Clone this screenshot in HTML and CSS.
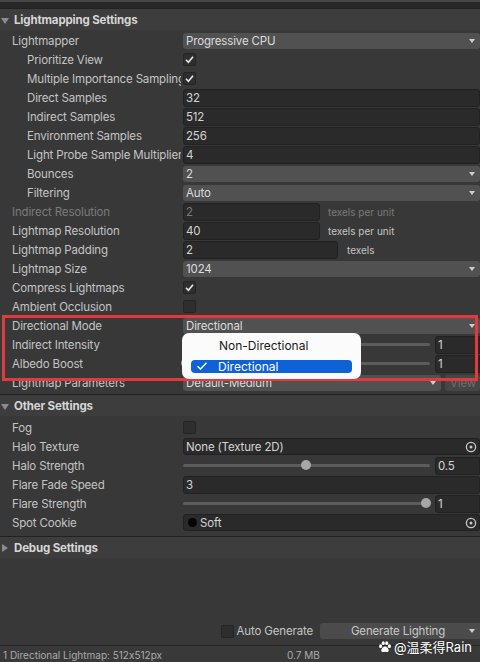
FILE: index.html
```html
<!DOCTYPE html>
<html>
<head>
<meta charset="utf-8">
<title>Lighting</title>
<link rel="stylesheet" href="styles.css">
</head>
<body>
<div class="topstrip"></div>

<section class="sec first">
  <div class="hdr"><span class="tri-down"></span><span>Lightmapping Settings</span></div>
  <div class="rows">
    <div class="row"><div class="lbl">Lightmapper</div><div class="val"><div class="dd">Progressive CPU<i class="arr"></i></div></div></div>
    <div class="row"><div class="lbl sub">Prioritize View</div><div class="val"><span class="cb"><svg viewBox="0 0 13 13" width="13" height="13"><path d="M3 6.8 L5.4 9.2 L10 3.8" fill="none" stroke="#e8e8e8" stroke-width="1.6"/></svg></span></div></div>
    <div class="row"><div class="lbl sub">Multiple Importance Sampling</div><div class="val"><span class="cb"><svg viewBox="0 0 13 13" width="13" height="13"><path d="M3 6.8 L5.4 9.2 L10 3.8" fill="none" stroke="#e8e8e8" stroke-width="1.6"/></svg></span></div></div>
    <div class="row"><div class="lbl sub">Direct Samples</div><div class="val"><div class="tf">32</div></div></div>
    <div class="row"><div class="lbl sub">Indirect Samples</div><div class="val"><div class="tf">512</div></div></div>
    <div class="row"><div class="lbl sub">Environment Samples</div><div class="val"><div class="tf">256</div></div></div>
    <div class="row"><div class="lbl sub">Light Probe Sample Multiplier</div><div class="val"><div class="tf">4</div></div></div>
    <div class="row"><div class="lbl sub">Bounces</div><div class="val"><div class="dd">2<i class="arr"></i></div></div></div>
    <div class="row"><div class="lbl sub">Filtering</div><div class="val"><div class="dd">Auto<i class="arr"></i></div></div></div>
    <div class="row"><div class="lbl dis">Indirect Resolution</div><div class="val"><div class="tf short dis">2</div><span class="unit dis">texels per unit</span></div></div>
    <div class="row"><div class="lbl">Lightmap Resolution</div><div class="val"><div class="tf short">40</div><span class="unit">texels per unit</span></div></div>
    <div class="row"><div class="lbl">Lightmap Padding</div><div class="val"><div class="tf pad">2</div><span class="unit">texels</span></div></div>
    <div class="row"><div class="lbl">Lightmap Size</div><div class="val"><div class="dd">1024<i class="arr"></i></div></div></div>
    <div class="row"><div class="lbl">Compress Lightmaps</div><div class="val"><span class="cb"><svg viewBox="0 0 13 13" width="13" height="13"><path d="M3 6.8 L5.4 9.2 L10 3.8" fill="none" stroke="#e8e8e8" stroke-width="1.6"/></svg></span></div></div>
    <div class="row"><div class="lbl">Ambient Occlusion</div><div class="val"><span class="cb"></span></div></div>
    <div class="row"><div class="lbl">Directional Mode</div><div class="val"><div class="dd">Directional<i class="arr"></i></div></div></div>
    <div class="row"><div class="lbl">Indirect Intensity</div><div class="val"><div class="slider"><div class="track"></div><div class="thumb" style="left:48px"></div></div><div class="num">1</div></div></div>
    <div class="row"><div class="lbl">Albedo Boost</div><div class="val"><div class="slider"><div class="track"></div><div class="thumb" style="left:3px"></div></div><div class="num">1</div></div></div>
    <div class="row"><div class="lbl">Lightmap Parameters</div><div class="val"><div class="dd">Default-Medium<i class="arr"></i></div><div class="btn-view">View</div></div></div>
  </div>
</section>

<section class="sec second">
  <div class="hdr"><span class="tri-down"></span><span>Other Settings</span></div>
  <div class="rows">
    <div class="row"><div class="lbl">Fog</div><div class="val"><span class="cb"></span></div></div>
    <div class="row"><div class="lbl">Halo Texture</div><div class="val"><div class="obj"><span class="otxt">None (Texture 2D)</span><span class="pick"><svg viewBox="0 0 12 12" width="12" height="12"><circle cx="6" cy="6" r="4.6" fill="none" stroke="#c9c9c9" stroke-width="1.3"/><circle cx="6" cy="6" r="1.5" fill="#c9c9c9"/></svg></span></div></div></div>
    <div class="row"><div class="lbl">Halo Strength</div><div class="val"><div class="slider"><div class="track"></div><div class="thumb" style="left:123px"></div></div><div class="num">0.5</div></div></div>
    <div class="row"><div class="lbl">Flare Fade Speed</div><div class="val"><div class="tf">3</div></div></div>
    <div class="row"><div class="lbl">Flare Strength</div><div class="val"><div class="slider"><div class="track"></div><div class="thumb" style="left:243px"></div></div><div class="num">1</div></div></div>
    <div class="row"><div class="lbl">Spot Cookie</div><div class="val"><div class="obj"><span class="cookie"></span><span class="otxt">Soft</span><span class="pick"><svg viewBox="0 0 12 12" width="12" height="12"><circle cx="6" cy="6" r="4.6" fill="none" stroke="#c9c9c9" stroke-width="1.3"/><circle cx="6" cy="6" r="1.5" fill="#c9c9c9"/></svg></span></div></div></div>
  </div>
</section>

<section class="sec">
  <div class="hdr"><span class="tri-right"></span><span>Debug Settings</span></div>
</section>

<div class="spacer"></div>

<div class="gen-row">
  <span class="cb"></span>
  <span class="gen-lbl">Auto Generate</span>
  <div class="gen-btn">Generate Lighting<i class="arr"></i></div>
</div>

<div class="status">
  <span class="st-main">1 Directional Lightmap: 512x512px</span>
  <span class="st-mb">0.7 MB</span>
</div>

<div class="redbox"></div>

<div class="menu">
  <div class="mi">Non-Directional</div>
  <div class="mi sel"><svg class="mcheck" viewBox="0 0 12 10" width="12" height="10"><path d="M1.5 5.2 L4.5 8 L10.5 1.8" fill="none" stroke="#ffffff" stroke-width="1.4"/></svg>Directional</div>
</div>

<div class="wm">
  <svg viewBox="0 0 16 16" width="14" height="14"><ellipse cx="3" cy="7" rx="1.7" ry="2.1" fill="#fff"/><ellipse cx="6" cy="3.6" rx="1.7" ry="2.1" fill="#fff"/><ellipse cx="10" cy="3.6" rx="1.7" ry="2.1" fill="#fff"/><ellipse cx="13" cy="7" rx="1.7" ry="2.1" fill="#fff"/><path d="M8 7.5 C5.5 7.5 3.6 10.5 3.8 12.3 C4 14.2 6 14 8 13.4 C10 14 12 14.2 12.2 12.3 C12.4 10.5 10.5 7.5 8 7.5 Z" fill="#fff"/></svg>
  <span>@温柔得Rain</span>
</div>
</body>
</html>
```

FILE: styles.css
```css
* { box-sizing: border-box; }
html, body { margin: 0; padding: 0; }
body {
  width: 480px;
  height: 662px;
  overflow: hidden;
  background: #383838;
  font-family: Inter, "Noto Sans", "Noto Sans CJK SC", sans-serif;
  font-size: 11.5px;
  letter-spacing: -0.15px;
  font-feature-settings: "calt" 0;
  color: #c4c4c4;
  display: flex;
  flex-direction: column;
  position: relative;
}

.topstrip {
  flex: none;
  height: 8px;
  background: #282828;
  border-top: 2px solid #464646;
}

.hdr {
  flex: none;
  height: 22px;
  border-top: 1px solid #222222;
  background: #3d3d3d;
  display: flex;
  align-items: center;
  padding-top: 1px;
  font-weight: 700;
  color: #d6d6d6;
}
.tri-down {
  width: 0; height: 0;
  border-left: 4px solid transparent;
  border-right: 4px solid transparent;
  border-top: 6px solid #8c8c8c;
  margin: 1px 5px 0 1px;
}
.tri-right {
  width: 0; height: 0;
  border-top: 4px solid transparent;
  border-bottom: 4px solid transparent;
  border-left: 6px solid #8c8c8c;
  margin: 0 6px 0 2px;
}

.rows { padding-top: 1px; padding-bottom: 4px; }
.first .rows { padding-bottom: 2px; }
.second .rows { padding-top: 2px; padding-bottom: 4px; }
.row { height: 19px; display: flex; align-items: center; }
.lbl {
  flex: none;
  width: 181px;
  margin-right: 2px;
  padding-left: 12px;
  white-space: nowrap;
  overflow: hidden;
}
.lbl.sub { padding-left: 27px; }
.lbl.dis { color: #7a7a7a; }

.val { flex: 1; min-width: 0; height: 100%; display: flex; align-items: center; }

.dd {
  flex: 1;
  height: 16px;
  line-height: 16px;
  background: #515151;
  border-radius: 3px;
  padding: 0 3px;
  position: relative;
  color: #dcdcdc;
  white-space: nowrap;
}
.arr {
  position: absolute;
  right: 5px;
  top: 6px;
  width: 0; height: 0;
  border-left: 3.5px solid transparent;
  border-right: 3.5px solid transparent;
  border-top: 4px solid #cfcfcf;
}

.tf {
  flex: 1;
  height: 18px;
  line-height: 16px;
  background: #2a2a2a;
  border: 1px solid #212121;
  border-radius: 3px;
  padding: 0 2px;
  color: #d4d4d4;
}
.tf.short { flex: none; width: 137px; }
.tf.pad { flex: none; width: 155px; }
.tf.dis { color: #7a7a7a; }
.unit { font-size: 10px; letter-spacing: 0; margin-left: 8px; color: #c4c4c4; }
.tf.pad + .unit { margin-left: 9px; }
.unit.dis { color: #7a7a7a; }

.cb {
  width: 13px; height: 13px;
  background: #2e2e2e;
  border: 1px solid #242424;
  border-radius: 2px;
  display: flex;
  align-items: center;
  justify-content: center;
  flex: none;
}
.cb svg { display: block; margin: -1px; }

.slider { flex: 1; height: 100%; position: relative; margin-right: 5px; }
.track {
  position: absolute; left: 0; right: 0; top: 8px;
  height: 3px; background: #5c5c5c; border-radius: 2px;
}
.thumb {
  position: absolute; top: 4px;
  width: 10px; height: 10px; margin-left: -5px;
  border-radius: 50%; background: #a6a6a6;
}
.num {
  flex: none;
  width: 45px;
  height: 18px;
  line-height: 16px;
  background: #2a2a2a;
  border: 1px solid #212121;
  border-radius: 3px 0 0 3px;
  padding: 0 2px;
  color: #d4d4d4;
}

.obj {
  flex: 1;
  height: 17px;
  background: #2a2a2a;
  border: 1px solid #212121;
  border-radius: 3px;
  display: flex;
  align-items: center;
  padding-left: 2px;
  color: #d4d4d4;
}
.otxt { flex: 1; }
.pick { width: 16px; height: 100%; display: flex; align-items: center; justify-content: center; }
.cookie {
  width: 9px; height: 9px; border-radius: 50%;
  background: #050505; margin: 0 3px 0 2px; flex: none;
}

.btn-view {
  flex: none;
  width: 35px;
  height: 16px;
  line-height: 16px;
  margin-left: 4px;
  background: #464646;
  border-radius: 3px;
  padding-left: 5px;
  color: #6f6f6f;
}

.spacer { flex: 1; }

.gen-row {
  flex: none;
  height: 20px;
  margin-bottom: 4px;
  display: flex;
  align-items: center;
  justify-content: flex-end;
}
.gen-lbl { margin-left: 3px; margin-right: 7px; }
.gen-btn {
  width: 160px;
  height: 16px;
  line-height: 16px;
  background: #4b4b4b;
  border-radius: 3px 0 0 3px;
  position: relative;
  text-align: center;
  padding-right: 4px;
  color: #c8c8c8;
}

.status {
  flex: none;
  height: 17px;
  border-top: 1px solid #262626;
  background: #393939;
  display: flex;
  align-items: center;
  padding-top: 2px;
  font-size: 10px;
  letter-spacing: 0;
  color: #ababab;
  padding-left: 3px;
}
.st-main { width: 284px; flex: none; }

.redbox {
  position: absolute;
  left: 2px; top: 315px;
  width: 476px; height: 66px;
  border: 3px solid #e03a3e;
}

.menu {
  position: absolute;
  left: 182px; top: 333px;
  width: 179px; height: 46px;
  background: #fbfbfb;
  border-radius: 7px;
  padding: 4px 9px 0 9px;
  font-size: 12px;
  letter-spacing: 0;
  color: #1a1a1a;
}
.mi { height: 17px; line-height: 17px; padding-left: 28px; margin-bottom: 6px; position: relative; }
.mi.sel {
  background: #0f62d6;
  color: #ffffff;
  border-radius: 4px;
  height: 13px;
  line-height: 13px;
  padding-left: 27px;
  margin-bottom: 0;
}
.mcheck { position: absolute; left: 5px; top: 1px; }

.wm {
  position: absolute;
  left: 378px; top: 637px;
  display: flex;
  align-items: center;
  gap: 2px;
  color: #ffffff;
  font-size: 13px;
  letter-spacing: 0;
  text-shadow: 0 0 2px rgba(0,0,0,0.5);
}
.wm svg { display: block; }
```
